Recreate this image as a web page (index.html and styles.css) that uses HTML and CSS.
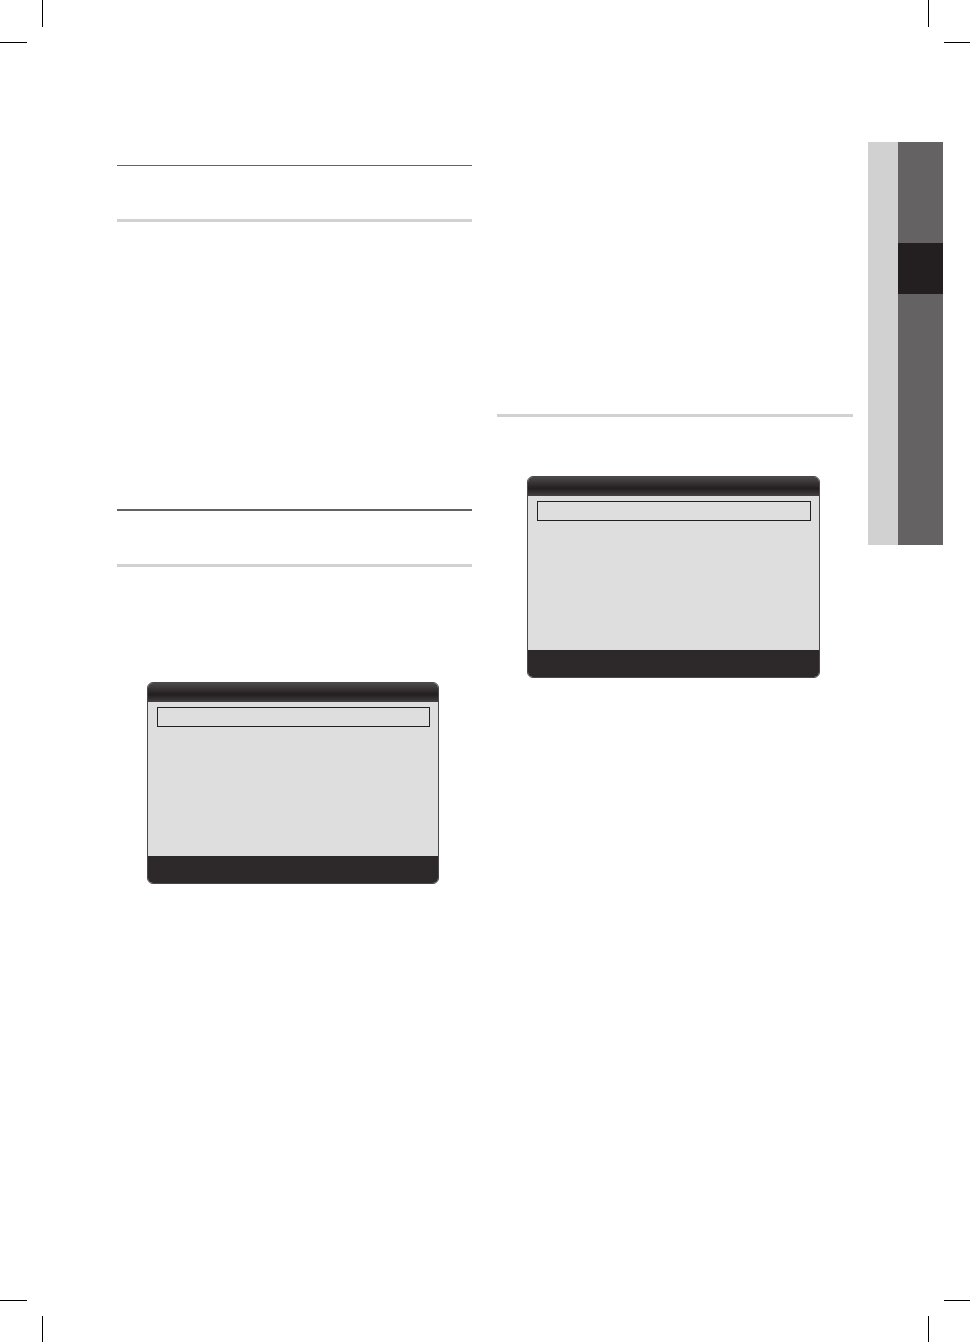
FILE: index.html
```html
<!DOCTYPE html>
<html lang="en">
<head>
<meta charset="utf-8">
<meta name="viewport" content="width=device-width, initial-scale=1">
<title>Manual page</title>
<link rel="stylesheet" href="styles.css">
</head>
<body>
<div class="sheet">
  <div class="crop crop-top crop-left"></div>
  <div class="crop crop-top crop-right"></div>
  <div class="crop crop-bottom crop-left"></div>
  <div class="crop crop-bottom crop-right"></div>
  <main class="columns">
    <div class="column">
      <section class="section section-first">
        <div class="heading heading-thin"></div>
      </section>
      <section class="section">
        <div class="heading"></div>
        <div class="screen">
          <div class="screen-title"></div>
          <div class="screen-body"><div class="screen-row"></div></div>
          <div class="screen-footer"></div>
        </div>
      </section>
    </div>
    <div class="column column-second">
      <div class="subheading"></div>
      <div class="screen">
        <div class="screen-title"></div>
        <div class="screen-body"><div class="screen-row"></div></div>
        <div class="screen-footer"></div>
      </div>
    </div>
  </main>
  <aside class="index-tab">
    <div class="index-light"></div>
    <div class="index-dark"><div class="index-current"></div></div>
  </aside>
</div>
</body>
</html>
```
FILE: styles.css
```css
* {
  box-sizing: border-box;
}

body {
  margin: 0;
  background: #fff;
  font-family: "Liberation Sans", Arial, sans-serif;
}

.sheet {
  position: relative;
  display: flex;
  gap: 15px;
  min-height: 100vh;
  padding: 142px 27px 0 117px;
}

/* Printer's crop marks in the four corners */
.crop {
  position: absolute;
  width: 43px;
  height: 43px;
}

.crop::before,
.crop::after {
  content: "";
  position: absolute;
  background: #000;
}

.crop::before {
  width: 1px;
  height: 27px;
}

.crop::after {
  width: 27px;
  height: 1px;
}

.crop-top { top: 0; }
.crop-bottom { bottom: -1px; }
.crop-left { left: 0; }
.crop-right { right: -1px; }
.crop-top::before { top: 0; }
.crop-top::after { bottom: 0; }
.crop-bottom::before { bottom: 0; }
.crop-bottom::after { top: 0; }
.crop-left::before { right: 0; }
.crop-left::after { left: 0; }
.crop-right::before { left: 0; }
.crop-right::after { right: 0; }

.sheet {
  overflow: hidden;
}

.columns {
  flex: 1;
  display: grid;
  grid-template-columns: 355fr 356fr;
  gap: 25px;
  align-items: start;
}

.column {
  padding-top: 23px;
}

.column-second {
  padding-top: 272px;
}

.section-first {
  min-height: 344px;
}

.heading {
  height: 58px;
  border-top: 2px solid #656263;
  border-bottom: 3px solid #d1d1d1;
}

.heading-thin {
  height: 57px;
  border-top-width: 1px;
}

.subheading {
  height: 3px;
  background: #d1d1d1;
}

.screen {
  margin: 59px 33px 0 30px;
  overflow: hidden;
  border: 1px solid #4b4849;
  border-radius: 6px;
  background: #dedede;
}

.heading + .screen {
  margin-top: 115px;
}

.screen-title {
  height: 19px;
  background: linear-gradient(#4c494a, #383435 30%, #231f20 60%, #322e2f 80%, #454142);
}

.screen-body {
  height: 154px;
  padding: 5px 8px 5px 9px;
}

.screen-row {
  height: 20px;
  border: 1px solid #231f20;
}

.screen-footer {
  height: 27px;
  background: #2d292a;
}

.index-tab {
  display: flex;
  flex: none;
  width: 75px;
  height: 403px;
}

.index-light {
  width: 30px;
  background: #d1d1d1;
}

.index-dark {
  flex: 1;
  padding-top: 101px;
  background: #656263;
}

.index-current {
  height: 51px;
  background: #231f20;
}
```
